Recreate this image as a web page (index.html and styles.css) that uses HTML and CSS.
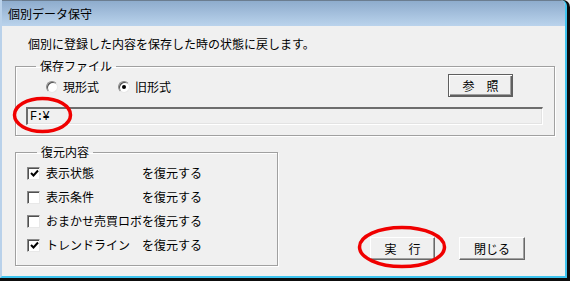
FILE: index.html
```html
<!DOCTYPE html>
<html>
	<head>
		<meta charset="UTF-8">
		<title>個別データ保守</title>
		<link rel="stylesheet" href="styles.css">
	</head>
	<body>
		<div class="window">
			<div class="frame">
				<div class="titlebar">個別データ保守</div>
				<div class="content">
					<p class="desc">個別に登録した内容を保存した時の状態に戻します。</p>

					<!-- 保存ファイル -->
					<fieldset class="group file-group">
						<legend>保存ファイル</legend>
						<div class="file-row">
							<div class="radios">
								<label class="radio"><span class="radio-mark"></span>現形式</label>
								<label class="radio checked"><span class="radio-mark"></span>旧形式</label>
							</div>
							<button class="btn btn-default">参　照</button>
						</div>
						<div class="path-field">F:¥</div>
					</fieldset>

					<div class="bottom-row">
						<!-- 復元内容 -->
						<fieldset class="group restore-group">
							<legend>復元内容</legend>
							<label class="check checked"><span class="check-mark"><svg viewBox="0 0 9 9"><polyline points="1,4 3.5,6.5 8,1.5" /></svg></span><span class="check-name">表示状態</span>を復元する</label>
							<label class="check"><span class="check-mark"></span><span class="check-name">表示条件</span>を復元する</label>
							<label class="check"><span class="check-mark"></span><span class="check-name">おまかせ売買ロボ</span>を復元する</label>
							<label class="check checked"><span class="check-mark"><svg viewBox="0 0 9 9"><polyline points="1,4 3.5,6.5 8,1.5" /></svg></span><span class="check-name">トレンドライン</span>を復元する</label>
						</fieldset>

						<div class="actions">
							<button class="btn">実　行</button>
							<button class="btn">閉じる</button>
						</div>
					</div>
				</div>
			</div>

			<!-- 赤丸 -->
			<svg class="marks" width="570" height="281">
				<ellipse cx="42.5" cy="115" rx="28" ry="16.5" />
				<ellipse cx="402" cy="247" rx="42.5" ry="19.5" />
			</svg>
		</div>
	</body>
</html>
```

FILE: styles.css
```css
* {
	margin: 0;
	padding: 0;
	box-sizing: border-box;
}

body {
	background: #f0f0f0;
	font-family: "Noto Sans CJK JP", "Noto Sans CJK SC", sans-serif;
	font-size: 12px;
	color: #000;
}

.window {
	position: relative;
	width: 570px;
	height: 281px;
	background: #0d0d0d;
	padding: 0 3px 3px 0;
	border-top-right-radius: 7px;
	overflow: hidden;
}

.frame {
	height: 100%;
	background: #f0f0f0;
	border-left: 2px solid #b9d1ea;
	border-right: 2px solid #3fc4ef;
	border-bottom: 2px solid #3fc4ef;
	border-top-right-radius: 6px;
	overflow: hidden;
}

.titlebar {
	height: 26px;
	padding-left: 6px;
	line-height: 26px;
	border-top: 1px solid #6b7d90;
	background: linear-gradient(#8eaccd, #bad3ec);
}

.content {
	padding: 11px 0 0 13px;
}

.desc {
	line-height: 14px;
	padding-left: 13px;
}

/* 枠 */
.group {
	margin: 8px 0 0 0;
	padding: 0;
	border: 1px solid #a0a0a0;
	box-shadow: inset 1px 1px 0 #fff, 1px 1px 0 #fff;
	min-width: 0;
}

.group legend {
	margin-left: 10px;
	padding: 0 4px;
	line-height: 14px;
}

.file-group {
	width: 540px;
	padding: 1px 11px 10px 10px;
}

.file-row {
	display: flex;
	align-items: center;
	justify-content: space-between;
	height: 23px;
	padding-right: 30px;
}

.radios {
	display: flex;
	margin: 3px 0 0 20px;
}

.radio {
	display: flex;
	align-items: center;
	margin-right: 19px;
	line-height: 14px;
}

.radio-mark {
	position: relative;
	width: 12px;
	height: 12px;
	margin-right: 5px;
	border-radius: 50%;
	background: #fff;
	border: 1px solid;
	border-color: #8a8a8a #e8e8e8 #e8e8e8 #8a8a8a;
	box-shadow: inset 1px 1px 0 #505050;
}

.radio.checked .radio-mark::after {
	content: "";
	position: absolute;
	left: 3px;
	top: 3px;
	width: 4px;
	height: 4px;
	border-radius: 50%;
	background: #000;
}

.path-field {
	margin-top: 10px;
	height: 18px;
	padding: 1px 0 0 2px;
	background: #f0f0f0;
	border-top: 2px solid #6d6d6d;
	border-left: 2px solid #6d6d6d;
	border-right: 1px solid #fff;
	border-bottom: 1px solid #fff;
	box-shadow: inset -1px -1px 0 #e3e3e3;
	font-family: "Liberation Mono", "DejaVu Sans Mono", monospace;
	font-size: 12px;
	letter-spacing: -1px;
	line-height: 14px;
}

/* ボタン */
.btn {
	width: 65px;
	height: 23px;
	background: #f0f0f0;
	font-family: inherit;
	font-size: 12px;
	color: #000;
	border: 1px solid;
	border-color: #fff #696969 #696969 #fff;
	box-shadow: inset -1px -1px 0 #a0a0a0;
}

.btn-default {
	border-color: #5f5f5f;
	box-shadow: inset 1px 1px 0 #fff, inset -1px -1px 0 #5f5f5f, inset -2px -2px 0 #a0a0a0;
}

.bottom-row {
	display: flex;
	align-items: flex-end;
	margin-top: 9px;
}

.restore-group {
	width: 263px;
	margin: 0;
	padding: 2px 0 8px 11px;
}

.check {
	display: flex;
	align-items: center;
	height: 24px;
	line-height: 14px;
}

.check-mark {
	display: flex;
	align-items: center;
	justify-content: center;
	width: 13px;
	height: 13px;
	margin-right: 6px;
	background: #fff;
	border: 1px solid;
	border-color: #8a8a8a #e8e8e8 #e8e8e8 #8a8a8a;
	box-shadow: inset 1px 1px 0 #505050;
}

.check-mark svg {
	width: 9px;
	height: 9px;
	margin: 1px 0 0 1px;
}

.check-mark polyline {
	fill: none;
	stroke: #000;
	stroke-width: 2;
}

.check-name {
	display: inline-block;
	width: 96px;
	white-space: nowrap;
}

.actions {
	display: flex;
	gap: 24px;
	margin: 0 0 6px 92px;
}

.actions .btn:last-child {
	width: 66px;
}

.marks {
	position: absolute;
	left: 0;
	top: 0;
	pointer-events: none;
}

.marks ellipse {
	fill: none;
	stroke: #f00000;
	stroke-width: 3.5;
}
```
